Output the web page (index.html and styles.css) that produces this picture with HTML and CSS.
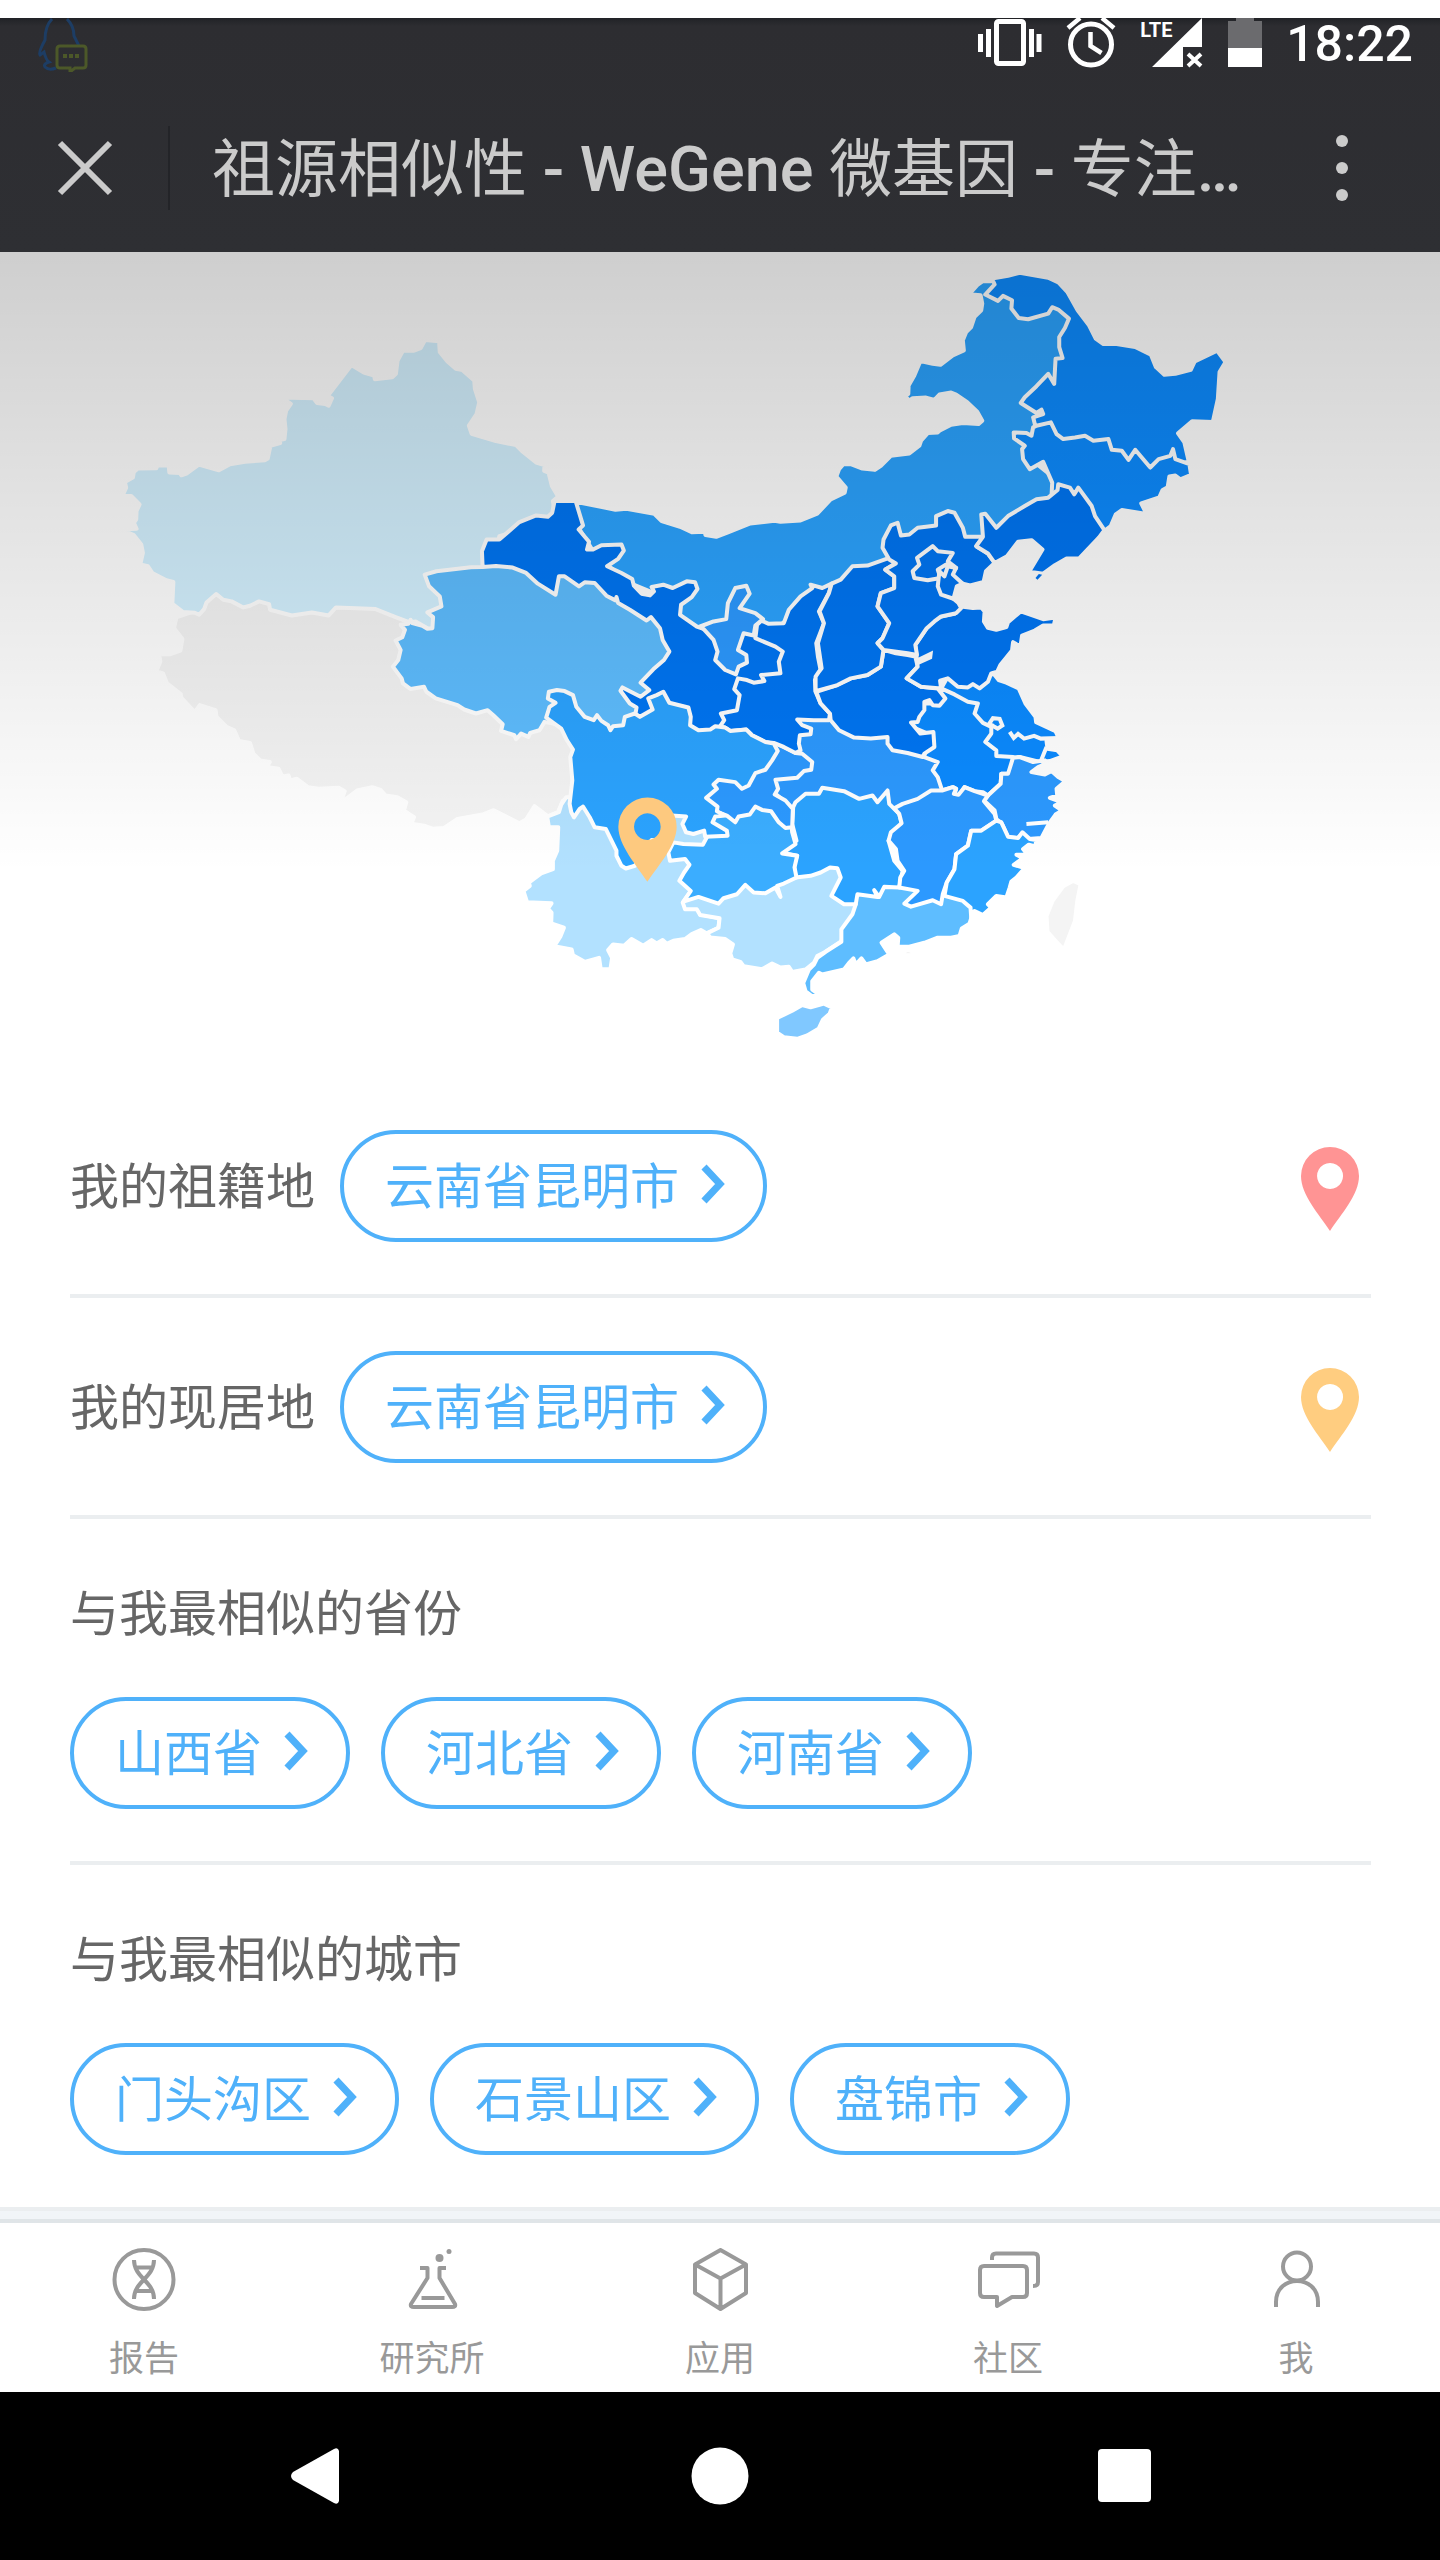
FILE: index.html
```html
<!DOCTYPE html>
<html lang="zh-CN">
<head>
<meta charset="utf-8">
<meta name="viewport" content="width=device-width, initial-scale=1">
<title>祖源相似性 - WeGene 微基因</title>
<link rel="stylesheet" href="styles.css">
</head>
<body>
<div class="top">
  <div class="status">
    <svg class="status-qq" viewBox="0 0 54 54" width="54" height="54" aria-hidden="true">
      <path d="M16 1 Q9 8 9 22 Q2 35 4 37 L8 34 Q10 42 13 44 Q7 46 9 49 Q13 53 20 50 M31 1 Q38 8 38 18 L43 28" fill="none" stroke="#1d3d64" stroke-width="3"/>
      <path d="M24 28 h23 q3 0 3 3 v16 q0 3 -3 3 h-8 l-5 4 v-4 h-10 q-3 0 -3 -3 v-16 q0 -3 3 -3z" fill="none" stroke="#4c5829" stroke-width="3"/>
      <path d="M27 38h4M33 38h4M39 38h4" stroke="#4c5829" stroke-width="4"/>
    </svg>
    <div class="status-icons">
      <svg viewBox="0 0 64 50" width="64" height="50" aria-hidden="true">
        <rect x="18.500" y="3.500" width="27" height="42" rx="2" fill="none" stroke="#fff" stroke-width="5"/>
        <path d="M2.500 16v18M10.500 11v28M53.500 11v28M61 16v18" stroke="#fff" stroke-width="5"/>
      </svg>
      <svg viewBox="0 0 50 50" width="50" height="50" aria-hidden="true">
        <circle cx="25" cy="26.500" r="20.500" fill="none" stroke="#fff" stroke-width="5"/>
        <path d="M24.500 14v14l11 7M2 10L14 0M36 0l12 10" fill="none" stroke="#fff" stroke-width="4.500"/>
      </svg>
      <span class="signal">
        <span class="signal-type">LTE</span>
        <svg viewBox="0 0 64 50" width="64" height="50" aria-hidden="true">
          <path d="M62 0v29H43v20H12z" fill="#fff"/>
          <path d="M48 36l13 12M61 36L48 48" stroke="#fff" stroke-width="4"/>
        </svg>
      </span>
      <svg viewBox="0 0 34 50" width="34" height="50" aria-hidden="true">
        <path d="M8 0h18v3h8v27H0V3h8z" fill="#6b6b6e"/>
        <path d="M0 30h34v19H0z" fill="#fff"/>
      </svg>
      <time class="clock">18:22</time>
    </div>
  </div>
  <header class="bar">
    <button class="bar-close" type="button" aria-label="关闭">
      <svg viewBox="0 0 56 56" width="56" height="56"><path d="M3 3l50 50M53 3L3 53" stroke="#cbcbcb" stroke-width="6"/></svg>
    </button>
    <h1 class="bar-title">祖源相似性<b> - WeGene </b>微基因<b> - </b>专注<b>…</b></h1>
    <button class="bar-more" type="button" aria-label="更多">
      <svg viewBox="0 0 12 68" width="12" height="68"><g fill="#cbcbcb"><circle cx="6" cy="7" r="6"/><circle cx="6" cy="34" r="6"/><circle cx="6" cy="61" r="6"/></g></svg>
    </button>
  </header>
</div>

<main>
  <svg class="map" viewBox="0 0 4320 2475" role="img" aria-label="各省相似度地图">
    <defs>
      <linearGradient id="shade" x1="0" y1="0" x2="0" y2="1">
        <stop offset="0" stop-color="#000" stop-opacity=".19"/>
        <stop offset="1" stop-color="#000" stop-opacity="0"/>
      </linearGradient>
    </defs>
    <g class="land" transform="translate(-8 -5) scale(1.004)">
      <!-- Inner Mongolia -->
      <g transform="translate(2340 -6)">
        <polygon class="c3" points="630,98 605,98 590,108 564,137 598,140 603,165 600,185 580,205 570,235 555,250 545,275 548,305 515,320 478,348 455,345 418,337 400,380 383,410 382,435 372,440 384,455 395,448 435,446 460,453 475,437 510,431 525,437 558,460 588,488 603,515 592,525 545,522 510,527 475,545 470,550 440,552 420,575 415,590 385,613 330,620 300,650 282,662 245,658 210,645 188,645 175,660 167,682 195,715 192,730 150,750 110,793 60,813 0,817 -18,814 -90,822 -155,848 -192,862 -224,857 -226,847 -265,848 -300,832 -355,815 -377,793 -460,778 -493,781 -612,757 -600,840 -550,920 -450,1000 -330,1050 -290,1110 -250,1140 -190,1130 -80,1150 -30,1150 70,1070 200,1000 340,950 380,880 480,830 540,900 600,900 650,850 830,740 860,720 760,640 740,580 800,530 750,460 840,420 860,330 890,210 830,160 800,170 720,190 690,130 665,120 640,90"/>
      </g>
      <!-- Tibet, Xinjiang, Qinghai -->
      <g transform="translate(300 204)">
        <polygon class="c0" points="235,893 228,925 253,957 247,992 215,1003 195,1003 180,982 187,1025 175,1054 195,1060 207,1090 248,1122 250,1133 290,1176 305,1155 352,1170 355,1190 385,1220 408,1230 422,1262 455,1268 465,1300 485,1320 514,1325 505,1340 540,1345 552,1369 570,1365 575,1380 595,1375 628,1400 660,1405 720,1402 738,1412 725,1448 775,1410 820,1400 845,1408 860,1425 895,1430 922,1445 915,1470 945,1490 937,1509 975,1515 1000,1524 1035,1522 1075,1495 1150,1482 1183,1469 1260,1508 1280,1497 1305,1457 1345,1487 1375,1475 1390,1440 1415,1440 1440,1300 1430,1220 1340,1170 1250,1180 1150,1130 980,1060 930,1000 930,900 800,850 500,830 350,800 300,870"/>
        <polygon class="c1" points="1376,532 1357,500 1347,460 1334,455 1335,438 1310,430 1270,398 1250,378 1190,366 1117,344 1109,320 1132,285 1140,250 1127,210 1125,185 1090,154 1070,150 1045,128 1022,100 1020,68 978,64 965,88 945,96 912,96 896,125 891,165 880,175 828,181 826,170 795,161 758,139 687,231 700,238 690,260 680,255 655,252 645,238 550,236 577,255 563,275 558,300 561,330 558,360 536,364 545,372 516,380 508,418 500,423 440,428 395,435 362,453 302,436 265,463 250,468 245,461 214,460 212,439 178,439 175,447 120,448 108,458 105,475 81,488 85,505 74,529 100,530 125,555 116,575 115,600 108,610 116,628 68,630 108,647 130,675 135,700 127,735 150,740 163,760 205,782 226,787 223,852 255,877 290,879 303,885 318,868 325,848 354,823 375,840 400,845 435,863 455,858 482,845 512,853 515,870 580,887 640,878 690,887 712,863 830,868 890,892 930,907 950,905 990,928 1040,920 1060,760 1180,740 1200,650 1370,600 1360,545"/>
        <polygon class="c2" points="1148,742 1115,743 1012,755 977,765 990,800 1022,830 1027,860 985,878 1002,892 1000,925 985,927 970,918 940,910 935,900 928,912 905,915 918,930 910,952 890,962 905,990 898,1020 882,1040 908,1075 912,1090 935,1107 975,1100 982,1115 1010,1135 1075,1155 1095,1168 1130,1180 1165,1170 1182,1185 1210,1212 1205,1232 1245,1245 1250,1257 1265,1240 1287,1250 1292,1238 1320,1230 1335,1205 1410,1220 1540,1270 1630,1220 1670,1120 1730,1000 1680,900 1510,780 1410,730 1360,770 1260,720 1170,710"/>
      </g>
      <!-- Gansu -->
      <g transform="translate(1410 684)">
        <polygon class="c5" points="255,65 318,65 340,138 327,150 358,187 352,210 370,210 395,197 455,195 462,213 445,238 412,260 455,280 487,298 492,318 515,342 540,347 552,335 545,322 580,315 608,325 650,305 675,308 682,328 665,352 633,375 630,405 680,440 700,447 760,480 840,440 900,470 960,510 950,600 840,640 830,700 790,760 650,780 600,700 560,720 515,720 497,700 500,682 480,670 452,632 458,622 512,650 538,630 512,608 550,568 582,540 598,515 578,480 570,445 543,412 530,422 480,390 445,370 440,352 437,362 410,348 375,310 345,308 328,320 285,290 268,290 258,345 205,312 170,280 130,264 80,259 40,262 38,215 52,180 90,180 150,128 200,108 235,112 248,100"/>
      </g>
      <!-- Heilongjiang, Jilin -->
      <g transform="translate(2340 -6)">
        <polygon class="c4" points="632,90 680,82 715,73 800,88 832,103 857,130 888,185 922,230 942,270 965,286 1000,285 1060,295 1107,318 1122,355 1147,378 1180,375 1226,363 1238,338 1305,306 1330,340 1312,370 1307,450 1292,519 1230,517 1188,553 1207,580 1220,637 1100,680 1000,630 850,600 790,560 760,525 755,505 785,495 780,482 765,492 718,462 730,445 765,412 800,375 818,405 822,330 843,328 833,295 833,265 850,238 862,210 830,183 812,176 800,195 740,212 712,208 690,180 692,155 665,142 650,157 612,138 640,108"/>
        <polygon class="c4" points="765,530 808,520 825,555 845,570 880,565 910,560 935,575 980,570 990,602 1020,605 1040,632 1060,602 1105,655 1130,630 1165,620 1173,600 1180,630 1222,645 1227,677 1195,690 1180,679 1162,682 1157,714 1142,722 1132,744 1078,762 1094,794 1020,782 1002,795 987,830 968,844 900,830 810,740 812,700 785,638 745,660 725,630 722,600 730,590 698,568 697,550 735,552 750,560 755,535"/>
      </g>
      <!-- Yunnan, Guangxi, Guangdong -->
      <g transform="translate(1440 1284)">
        <polygon class="c1b" points="245,372 238,395 203,408 208,439 236,440 233,510 220,540 220,565 185,578 148,605 151,615 132,630 143,664 216,667 205,683 216,695 215,727 253,740 243,765 224,795 276,805 280,822 315,842 358,830 363,864 392,864 397,830 385,807 400,790 433,794 455,774 490,794 515,777 530,787 548,777 560,788 580,779 615,774 635,759 662,747 680,757 715,740 718,712 660,700 655,685 650,560 700,480 680,440 600,380 300,350 260,350"/>
        <polygon class="c1b" points="608,665 615,685 650,685 660,702 718,712 715,740 680,757 690,769 735,774 758,790 750,817 756,835 780,842 790,855 845,864 875,847 900,859 925,857 935,872 975,865 1000,845 1010,825 1035,812 1080,782 1140,700 1150,640 1100,560 950,540 750,600 640,620"/>
        <polygon class="c2" points="1090,630 1125,670 1115,700 1082,745 1082,782 1035,812 1010,830 1000,850 985,865 968,905 975,930 995,945 1016,940 995,925 995,900 1015,875 1025,880 1090,865 1105,845 1118,832 1125,850 1142,832 1155,850 1190,840 1225,820 1202,785 1240,760 1252,770 1250,797 1285,797 1330,785 1370,770 1410,770 1435,765 1442,742 1465,728 1472,705 1480,670 1400,630 1240,590"/>
      </g>
      <!-- Hubei, Jiangsu, Anhui, Zhejiang -->
      <g transform="translate(2280 924)">
        <polygon class="c3b" points="110,480 208,450 450,550 550,610 560,700 400,780 100,780 97,745 45,700 20,650 60,560"/>
        <polygon class="c4b" points="700,345 712,360 735,368 772,385 792,430 822,470 824,486 882,513 892,535 855,542 858,565 887,570 904,588 865,602 835,605 775,590 700,600 640,500 600,450 540,385 560,350 690,340"/>
        <polygon class="c4b" points="540,385 580,403 620,425 650,430 640,460 665,488 690,500 690,520 672,545 705,570 705,587 755,590 750,630 740,640 720,640 718,670 680,705 665,695 640,692 610,680 595,705 580,700 585,685 575,680 543,690 530,650 515,630 530,605 490,590 500,520 430,490 470,430 530,430"/>
        <polygon class="c3b" points="755,592 775,590 815,605 850,600 858,608 830,620 810,635 850,642 870,632 890,650 912,662 885,685 887,705 865,712 900,725 880,735 902,750 882,762 862,790 840,832 800,835 783,818 770,832 740,830 722,790 705,775 700,750 668,720 680,705 718,670 720,640 740,640"/>
        <path class="line" d="M745 515l12 18 13-12 18 14 30-8 20 8 55-2M697 497l-14-5 12-18 20 2 8 20-14 9-14-8M855 560l-18 45M850 608l-15-8M795 790l65-5"/>
      </g>
      <!-- Hunan, Jiangxi, Fujian, islands -->
      <g transform="translate(2280 1524)">
        <polygon class="c3" points="98,140 105,125 135,100 175,100 185,82 250,92 295,115 335,105 350,125 380,90 385,130 415,160 422,188 383,240 400,300 425,330 415,380 370,378 355,408 340,388 350,408 290,400 285,430 250,430 212,405 240,350 230,322 208,320 180,335 150,345 105,350 100,310 110,285 62,275 108,240 95,190"/>
        <polygon class="c3b" points="400,143 425,130 470,115 510,90 543,90 575,80 585,85 578,100 592,103 610,80 640,92 680,105 668,122 700,160 705,180 660,210 630,210 620,255 585,280 580,325 557,365 545,400 540,430 515,418 450,437 430,428 470,390 415,380 418,350 430,330 410,300 405,265 383,240 390,215 422,188 415,160"/>
        <polygon class="c3" points="705,180 720,185 740,228 770,232 783,215 805,235 824,238 822,257 802,252 785,265 797,280 765,282 785,292 757,312 790,322 765,350 750,362 745,380 735,410 705,405 680,430 690,440 665,462 640,450 630,470 628,440 605,420 550,405 557,365 580,325 585,280 620,255 630,210 660,210"/>
        <polygon class="c2b" points="50,770 95,748 125,731 150,738 190,727 214,738 207,757 187,775 174,802 140,822 110,832 70,827 50,814"/>
        <polygon class="c0" points="935,360 957,370 947,420 940,480 907,566 880,537 858,512 855,465 873,420 905,376"/>
        <polygon class="c0" points="416,582 440,565 464,575 450,582"/>
      </g>
      <!-- Guizhou, Chongqing -->
      <g transform="translate(1440 1284)">
        <polygon class="c2c" points="580,485 565,515 570,540 615,535 628,552 612,575 598,600 632,630 610,662 655,648 715,668 730,652 770,640 795,612 820,635 855,637 885,620 900,648 890,615 910,608 948,590 942,560 950,525 905,518 945,490 935,455 930,400 850,360 750,370 690,410 680,470 668,492 610,490"/>
        <polygon class="c3b" points="890,190 945,218 965,220 995,245 992,268 970,272 950,292 885,298 893,325 883,342 915,360 937,385 935,440 915,442 895,425 872,392 845,388 825,378 808,402 775,408 765,425 740,405 700,390 660,350 700,280 800,250 860,190"/>
      </g>
      <!-- Shaanxi, Sichuan, Ningxia -->
      <g transform="translate(1410 684)">
        <polygon class="c5" points="868,420 895,432 940,430 955,390 990,350 1025,325 1020,315 1055,325 1083,312 1075,340 1045,395 1060,430 1037,490 1042,530 1050,570 1033,600 1035,635 1050,670 1078,700 1075,720 1030,720 980,718 995,735 1022,745 1020,762 988,765 985,790 990,810 975,818 940,800 910,788 885,785 845,765 828,748 780,752 765,742 750,738 762,720 752,700 800,690 808,645 792,627 803,595 830,600 850,608 882,603 872,585 930,580 925,545 937,515 915,500 855,475 860,435 875,420"/>
        <polygon class="c3" points="230,712 240,680 258,668 235,655 238,635 262,630 285,633 310,645 320,680 345,710 372,720 382,705 395,722 415,735 422,750 430,738 460,735 465,710 495,700 510,710 548,688 535,655 560,645 580,635 598,668 655,682 662,710 660,735 685,750 720,748 735,738 765,742 780,752 828,748 845,765 885,785 910,790 922,812 905,840 885,868 855,878 835,915 815,925 795,905 745,898 730,912 740,925 708,952 742,978 740,992 765,1005 735,1008 727,1025 770,1050 772,1065 705,1068 702,1050 670,1060 648,1055 637,1030 648,1008 605,1005 570,1080 545,1078 495,1155 468,1163 455,1155 440,1125 440,1110 408,1045 375,1040 360,1010 340,978 330,985 313,1010 305,995 300,970 308,900 302,830 310,808 292,780 275,745"/>
        <polygon class="c3b" points="690,440 730,425 768,418 773,370 795,325 828,318 838,342 808,385 855,400 878,418 855,437 850,467 820,460 803,510 828,525 830,548 805,560 797,583 765,570 735,540 742,515 730,480 700,447"/>
      </g>
      <!-- Henan, Shanxi, Shandong -->
      <g transform="translate(2280 924)">
        <polygon class="c5" points="368,270 405,280 440,285 463,290 470,320 437,355 480,380 530,385 553,415 535,437 515,435 505,420 490,425 490,450 475,470 470,485 450,487 478,520 517,515 520,560 490,580 485,590 440,578 395,570 380,550 380,530 330,535 280,532 235,510 210,480 208,460 180,430 167,395 230,375 270,355 320,345 360,320"/>
        <polygon class="c5" points="213,72 240,60 275,20 320,18 385,-5 402,12 373,30 400,50 400,85 360,100 350,140 385,190 365,235 350,250 368,270 360,320 320,345 270,355 230,375 165,393 165,350 175,335 183,325 172,250 190,190 177,155 205,100"/>
        <polygon class="c5" points="600,140 635,145 660,143 670,155 668,185 680,204 705,210 735,202 740,187 778,155 802,163 845,178 882,173 877,197 845,197 820,212 782,227 777,260 755,247 752,272 717,315 708,335 690,340 680,365 655,385 635,372 620,382 590,380 560,355 537,362 540,385 480,380 437,355 470,320 463,255 497,205 520,182 540,170 580,162"/>
        <path class="spike" d="M465 318l48-22 3-24-46 22z"/>
      </g>
      <!-- Hebei, Liaoning, Beijing, Tianjin -->
      <g transform="translate(2340 -6)">
        <polygon class="c5" points="325,930 305,895 308,870 330,828 350,820 360,858 385,855 410,835 435,832 465,828 465,800 500,785 520,790 545,835 552,862 605,862 585,890 620,912 640,940 614,965 607,997 567,1007 545,1002 527,1010 517,1047 532,1060 540,1075 525,1090 480,1100 460,1115 437,1135 403,1185 408,1215 380,1210 308,1200 290,1180 305,1165 325,1120 290,1070 300,1030 340,1015 340,980 313,960 345,942"/>
        <polygon class="c5" points="830,705 865,715 878,735 890,715 930,770 940,800 968,842 952,864 892,927 855,927 820,947 785,972 743,966 783,900 750,872 710,877 677,920 640,940 620,912 585,890 605,862 600,795 612,793 645,835 680,800 730,770 765,750 800,745 828,722"/>
        <polygon class="c5" points="395,965 415,945 408,925 455,890 470,905 515,910 500,935 525,955 510,960 495,945 470,960 478,985 440,992 400,985"/>
        <polygon class="c5" points="500,950 525,955 515,975 545,1002 527,1010 517,1047 480,1035 470,1010 475,965 490,980"/>
        <polygon class="c5 bare" points="762,985 772,973 782,975 768,990"/>
      </g>
    </g>
    <rect width="4320" height="1860" fill="url(#shade)"/>
    <path fill="#fdc97f" fill-rule="evenodd" d="M1942 1889C1910 1840 1855 1780 1855 1724A87 87 0 0 1 2030 1724C2030 1780 1975 1840 1942 1889ZM1942 1684a40 40 0 1 0 .1 0z"/>
  </svg>

  <section class="panel">
    <div class="row">
      <span class="label">我的祖籍地</span>
      <button class="pill" type="button">云南省昆明市<svg class="chev" viewBox="0 0 24 40" width="24" height="40"><path d="M3 3l16 17L3 37"/></svg></button>
      <svg class="pin pin-red" viewBox="0 0 58 84" width="58" height="84"><path fill-rule="evenodd" d="M29 84C18 67 0 48 0 29a29 29 0 0 1 58 0c0 19-18 38-29 55zM29 16a13 13 0 1 0 .1 0z"/></svg>
    </div>
    <div class="row">
      <span class="label">我的现居地</span>
      <button class="pill" type="button">云南省昆明市<svg class="chev" viewBox="0 0 24 40" width="24" height="40"><path d="M3 3l16 17L3 37"/></svg></button>
      <svg class="pin pin-gold" viewBox="0 0 58 84" width="58" height="84"><path fill-rule="evenodd" d="M29 84C18 67 0 48 0 29a29 29 0 0 1 58 0c0 19-18 38-29 55zM29 16a13 13 0 1 0 .1 0z"/></svg>
    </div>
    <div class="group">
      <h2 class="label">与我最相似的省份</h2>
      <div class="pills">
        <button class="pill" type="button">山西省<svg class="chev" viewBox="0 0 24 40" width="24" height="40"><path d="M3 3l16 17L3 37"/></svg></button>
        <button class="pill" type="button">河北省<svg class="chev" viewBox="0 0 24 40" width="24" height="40"><path d="M3 3l16 17L3 37"/></svg></button>
        <button class="pill" type="button">河南省<svg class="chev" viewBox="0 0 24 40" width="24" height="40"><path d="M3 3l16 17L3 37"/></svg></button>
      </div>
    </div>
    <div class="group">
      <h2 class="label">与我最相似的城市</h2>
      <div class="pills">
        <button class="pill" type="button">门头沟区<svg class="chev" viewBox="0 0 24 40" width="24" height="40"><path d="M3 3l16 17L3 37"/></svg></button>
        <button class="pill" type="button">石景山区<svg class="chev" viewBox="0 0 24 40" width="24" height="40"><path d="M3 3l16 17L3 37"/></svg></button>
        <button class="pill" type="button">盘锦市<svg class="chev" viewBox="0 0 24 40" width="24" height="40"><path d="M3 3l16 17L3 37"/></svg></button>
      </div>
    </div>
  </section>
</main>

<nav class="tabs">
  <a class="tab" href="#report"><svg viewBox="0 0 64 64" width="64" height="64"><circle cx="32" cy="31.500" r="29.500"/><path d="M22 12C22 30 42 33 42 51M42 12C42 30 22 33 22 51M24 19.500h16M24 43h16"/></svg>报告</a>
  <a class="tab" href="#lab"><svg viewBox="0 0 64 64" width="64" height="64"><path d="M20 20h7.500v10L11 56q-1 3 3 3h38q4 0 3-3L39.500 30V20H46M21.500 50h23"/><g class="dots"><circle cx="39.500" cy="10" r="4"/><circle cx="49" cy="3.500" r="2.500"/></g></svg>研究所</a>
  <a class="tab" href="#apps"><svg viewBox="0 0 64 64" width="64" height="64"><path d="M32.500 2L58 16.500v28.500L32.500 61 7 45V16.500zM8 17l24.500 13.500L57 17M32.500 30v30"/></svg>应用</a>
  <a class="tab" href="#community"><svg viewBox="0 0 64 64" width="64" height="64"><path d="M8 18h39q4 0 4 4v23q0 4-4 4H36L21 58v-9H8q-4 0-4-4V22q0-4 4-4zM16 12V9.500q0-4 4-4h38q4 0 4 4V34q0 4-5 4"/></svg>社区</a>
  <a class="tab" href="#me"><svg viewBox="0 0 64 64" width="64" height="64"><circle cx="33" cy="18.500" r="14"/><path d="M12 59V54C12 26 54 26 54 54v5"/></svg>我</a>
</nav>

<div class="sys">
  <button type="button" aria-label="返回"><svg viewBox="0 0 50 58" width="50" height="58"><path fill="#fff" d="M49 4v50q-1 4-5 2L3 33q-4-4 0-8L44 2q4-2 5 2z"/></svg></button>
  <button type="button" aria-label="主页"><svg viewBox="0 0 58 58" width="58" height="58"><circle fill="#fff" cx="29" cy="29" r="28.500"/></svg></button>
  <button type="button" aria-label="最近任务"><svg viewBox="0 0 54 54" width="54" height="54"><rect fill="#fff" width="53" height="53" rx="4"/></svg></button>
</div>
</body>
</html>
```

FILE: styles.css
```css
* { box-sizing: border-box; }

body {
  margin: 0;
  background: #fff;
  color: #666;
  font-family: Roboto, "Noto Sans CJK SC", sans-serif;
}

button {
  margin: 0;
  padding: 0;
  border: 0;
  background: none;
  font: inherit;
  color: inherit;
}

svg { display: block; flex: none; }

/* status and title bars */
.top {
  margin-top: 18px;
  background: linear-gradient(#212226, #2d2d31 8px, #2e2f33);
}

.status {
  display: flex;
  justify-content: space-between;
  align-items: flex-start;
  height: 66px;
  padding: 0 27px 0 36px;
}

.status-icons {
  display: flex;
  gap: 24px;
  color: #fff;
}

.signal { position: relative; }

.signal-type {
  position: absolute;
  top: 0;
  left: 0;
  font-size: 20px;
  line-height: 24px;
  font-weight: 700;
}

.clock {
  padding-top: 1px;
  font-size: 50px;
  line-height: 50px;
  font-weight: 500;
}

.bar {
  display: flex;
  align-items: center;
  height: 168px;
}

.bar-close {
  width: 170px;
  height: 84px;
  padding-left: 57px;
  border-right: 2px solid #232428;
}

.bar-title {
  flex: 1;
  margin: 0;
  padding: 4px 0 0 42px;
  color: #cbcbcb;
  font-size: 63px;
  font-weight: 400;
  line-height: 84px;
  white-space: nowrap;
}

.bar-title b { font-weight: 500; }

.bar-more {
  padding: 0 92px 0 20px;
}

/* map */
.map { width: 100%; height: auto; }

.land polygon { stroke: #fff; stroke-width: 12; stroke-linejoin: round; }
.land .bare { stroke: none; }
.line { fill: none; stroke: #fff; stroke-width: 12; }
.spike { fill: #fff; }
.c0 { fill: #f4f4f4; }
.c1 { fill: #d4f1ff; }
.c1b { fill: #b2e1ff; }
.c2 { fill: #5ebdff; }
.c2b { fill: #80c8ff; }
.c2c { fill: #3badff; }
.c3 { fill: #2ba3ff; }
.c3b { fill: #2c99ff; }
.c4 { fill: #0d8bff; }
.c4b { fill: #0b8aff; }
.c5 { fill: #0075f3; }

/* similarity details */
.panel { padding: 0 69px 0 70px; }

.label {
  margin: 0;
  padding-top: 4px;
  font-size: 49px;
  line-height: 72px;
  font-weight: 400;
}

.row {
  display: flex;
  align-items: center;
  gap: 25px;
  padding: 53px 12px 52px 0;
  border-bottom: 4px solid #ebeef0;
}

.group { padding: 56px 0 52px; }
.group .label { margin-bottom: 46px; }
.group:not(:last-child) { border-bottom: 4px solid #ebeef0; }

.pills { display: flex; flex-wrap: wrap; gap: 31px; }

.pill {
  display: flex;
  align-items: center;
  gap: 22px;
  height: 112px;
  padding: 4px 38px 0 41px;
  border: 4px solid #4fb1fa;
  border-radius: 56px;
  color: #4fb1fa;
  font-size: 49px;
  line-height: 72px;
  white-space: nowrap;
}

.chev { margin-bottom: 8px; }
.chev path { fill: none; stroke: #4fb1fa; stroke-width: 7; }

.pin { margin: 6px 0 0 auto; }
.pin-red { fill: #ff9494; }
.pin-gold { fill: #ffcd80; }

/* app tabs */
.tabs {
  display: grid;
  grid-template-columns: repeat(5, 1fr);
  border-top: 4px solid #ebeef0;
  background: #fff linear-gradient(#f1f5f8 8px, #e0e5e8 8px, #e0e5e8 12px, #fff 12px);
  height: 185px;
  padding-top: 37px;
}

.tab {
  display: flex;
  flex-direction: column;
  align-items: center;
  gap: 23px;
  color: #999;
  font-size: 35px;
  line-height: 50px;
  text-decoration: none;
}

.tab svg {
  fill: none;
  stroke: #999;
  stroke-width: 4;
  stroke-linecap: butt;
  stroke-linejoin: round;
}

.tab .dots { fill: #999; stroke: none; }

/* system navigation */
.sys {
  display: grid;
  grid-template-columns: repeat(3, 1fr);
  justify-items: center;
  align-items: center;
  height: 168px;
  padding: 0 112px;
  background: #000;
}
```
